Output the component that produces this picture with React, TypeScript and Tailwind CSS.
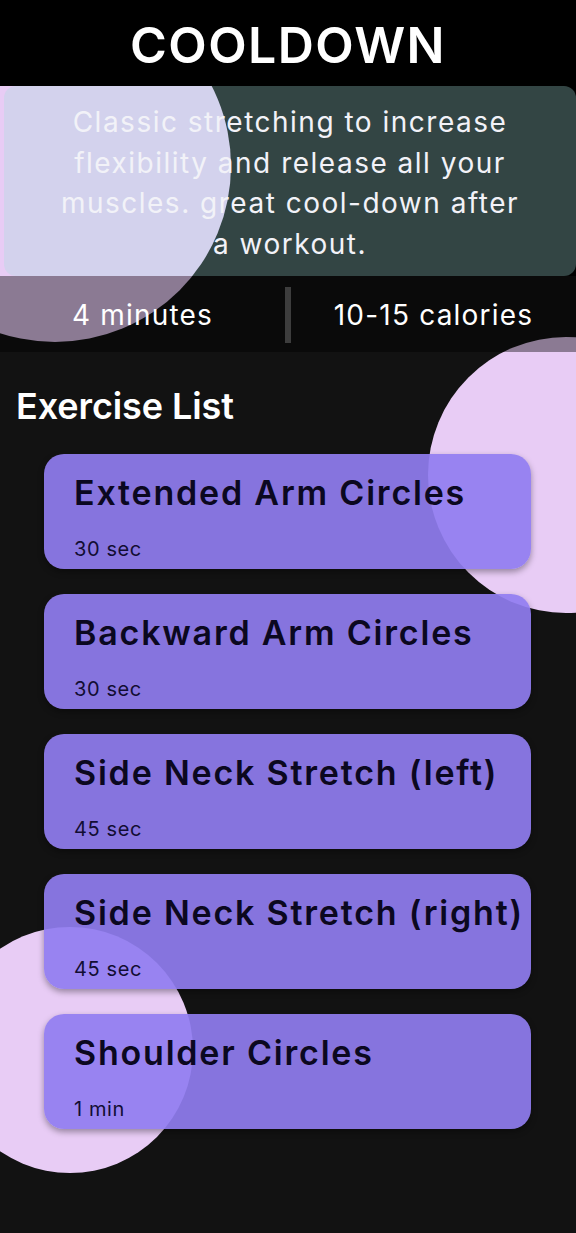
const exercises = [
  { name: 'Extended Arm Circles', time: '30 sec' },
  { name: 'Backward Arm Circles', time: '30 sec' },
  { name: 'Side Neck Stretch (left)', time: '45 sec' },
  { name: 'Side Neck Stretch (right)', time: '45 sec' },
  { name: 'Shoulder Circles', time: '1 min' },
];

function ExerciseCard({ name, time }: { name: string; time: string }) {
  return (
    <div className="relative z-10 flex h-[115px] flex-col rounded-[20px] bg-[rgba(144,125,240,0.92)] pl-[30px] pt-[19px] pb-[6px] shadow-[0_3px_6px_rgba(0,0,0,0.35)]">
      <div className="whitespace-nowrap text-[34px] font-semibold leading-[40px] tracking-[1.8px] text-[#0b0820]">
        {name}
      </div>
      <div className="mt-auto text-[20px] leading-[28px] tracking-[0.6px] text-[#120d33]">{time}</div>
    </div>
  );
}

export default function App() {
  return (
    <div
      className="relative min-h-[1233px] overflow-hidden bg-[#121212]"
      style={{ fontFamily: 'Inter, "Open Sans", sans-serif' }}
    >
      {/* background circles */}
      <div className="absolute left-[-121px] top-[-10px] h-[352px] w-[352px] rounded-full bg-[#e8ccf5]" />
      <div className="absolute left-[428px] top-[337px] h-[276px] w-[276px] rounded-full bg-[#e8ccf5]" />
      <div className="absolute left-[-53px] top-[927px] h-[246px] w-[246px] rounded-full bg-[#e8ccf5]" />

      {/* Header */}
      <div className="relative z-20 flex h-[86px] items-center justify-center bg-black pt-[4px]">
        <h1 className="text-[50px] font-semibold tracking-[1.4px] text-white">COOLDOWN</h1>
      </div>

      <div className="bg-black pl-[4px]">
        <div className="relative z-10 rounded-xl bg-[rgba(165,222,219,0.31)] px-[20px] pt-[16px] pb-[12px] text-center text-[28px] leading-[40.5px] tracking-[1.5px] text-[#f2f2f8]">
          Classic stretching to increase
          <br />
          flexibility and release all your
          <br />
          muscles. great cool-down after
          <br />
          a workout.
        </div>
      </div>

      {/* Stats */}
      <div className="relative z-10 flex h-[76px] items-center bg-black/40 pt-[2px] text-[28px] tracking-[1.2px] text-white">
        <div className="flex-1 text-center">4 minutes</div>
        <div className="h-[56px] w-[6px] bg-[#3d3d3d]" />
        <div className="flex-1 text-center">10-15 calories</div>
      </div>

      {/* Exercise list */}
      <div className="relative z-10 px-[16px] pt-[34px]">
        <h2 className="text-[36px] font-semibold leading-[40px] tracking-[-0.1px] text-white">Exercise List</h2>
        <div className="ml-[28px] mr-[29px] mt-[28px] flex flex-col gap-[25px]">
          {exercises.map((e) => (
            <ExerciseCard key={e.name} name={e.name} time={e.time} />
          ))}
        </div>
      </div>
    </div>
  );
}
